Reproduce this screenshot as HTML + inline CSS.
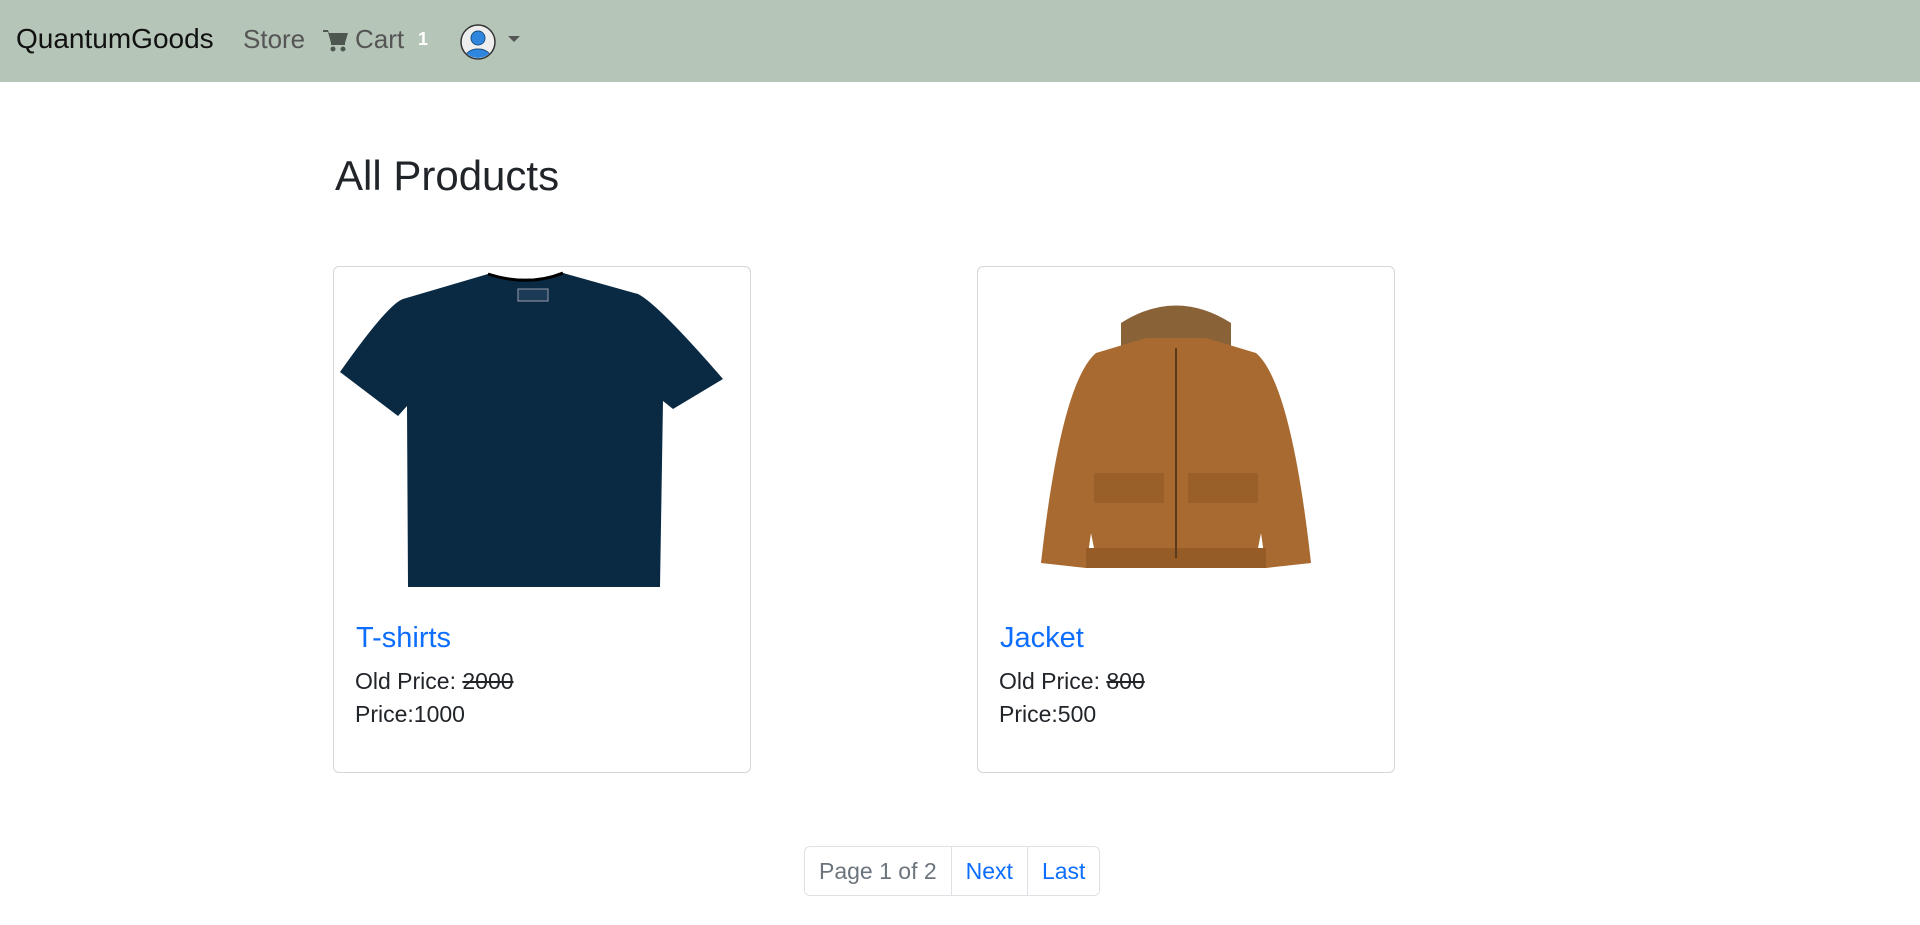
<!DOCTYPE html>
<html><head><meta charset="utf-8"><style>
*{box-sizing:border-box;margin:0;padding:0}
body{width:1920px;height:925px;overflow:hidden;background:#fff;font-family:"Comic Sans MS","Liberation Sans",sans-serif;color:#212529}
.nav{height:82px;background:#b5c5b7;position:relative}
.nav span{position:absolute;top:24px;font-size:26px}
.card{position:absolute;top:266px;width:418px;height:507px;border:1px solid #d6d6d6;border-radius:6px}
.card h5{position:absolute;left:22px;top:355px;font-size:29px;font-weight:normal;color:#0d6efd}
.card p{position:absolute;left:21px;font-size:23px}
.pg{position:absolute;left:804px;top:846px;height:50px;border:1px solid #dee2e6;border-radius:6px;display:flex;font-size:23px}
.pg div{padding:0 14px;line-height:48px;border-right:1px solid #dee2e6;color:#0d6efd}
.pg div:last-child{border:none}
</style></head><body>
<div class="nav">
<span style="left:16px;color:#111;font-size:28px;top:23px">QuantumGoods</span>
<span style="left:243px;color:#555">Store</span>
<svg style="position:absolute;left:323px;top:28px" width="26" height="24" viewBox="0 0 26 24"><path d="M0 2h5l1 3h19l-3 10H8L5 4H0z" fill="#4e5650"/><rect x="8" y="15" width="14" height="2" fill="#4e5650"/><circle cx="10" cy="21" r="2.5" fill="#4e5650"/><circle cx="20" cy="21" r="2.5" fill="#4e5650"/></svg>
<span style="left:355px;color:#555">Cart</span>
<span style="left:418px;color:#fff;font-size:18px;top:29px;font-weight:bold">1</span>
<svg style="position:absolute;left:460px;top:24px" width="36" height="36" viewBox="0 0 36 36"><circle cx="18" cy="18" r="17" fill="#eee" stroke="#333" stroke-width="1.5"/><clipPath id="c"><circle cx="18" cy="18" r="16"/></clipPath><g clip-path="url(#c)"><circle cx="18" cy="14" r="7" fill="#2e86de" stroke="#1a4f80"/><ellipse cx="18" cy="34" rx="13" ry="9" fill="#2e86de" stroke="#1a4f80"/></g></svg>
<svg style="position:absolute;left:508px;top:36px" width="12" height="7"><path d="M0 0h12L6 6z" fill="#555"/></svg>
</div>
<div style="position:absolute;left:335px;top:152px;font-size:42px">All Products</div>
<div class="card" style="left:333px">
<svg style="position:absolute;left:4px;top:2px" width="410" height="330" viewBox="0 0 410 330"><path d="M150 5 Q190 15 225 4 L300 25 Q320 35 385 110 L335 140 L325 132 L322 318 L70 318 L69 137 L60 147 L2 103 Q50 35 65 30 Z" fill="#0a2a44"/><path d="M150 5 Q190 18 225 4" stroke="#000" stroke-width="3" fill="none"/><rect x="180" y="20" width="30" height="12" fill="#1b3a55" stroke="#99a"/></svg>
<h5>T-shirts</h5>
<p style="top:401px">Old Price: <s>2000</s></p>
<p style="top:434px">Price:1000</p>
</div>
<div class="card" style="left:977px">
<svg style="position:absolute;left:48px;top:26px" width="302" height="284" viewBox="0 0 302 284"><path d="M95 30 Q150 -5 205 30 L205 55 L95 55Z" fill="#8a6238"/><path d="M70 60 L120 45 L180 45 L230 60 Q265 90 285 270 L240 275 L235 240 L230 265 L70 265 L65 240 L60 275 L15 270 Q35 90 70 60Z" fill="#a86a30"/><rect x="60" y="255" width="180" height="20" fill="#955c27"/><path d="M150 55 V265" stroke="#5a3a1a" stroke-width="2"/><rect x="68" y="180" width="70" height="30" fill="#9a6029"/><rect x="162" y="180" width="70" height="30" fill="#9a6029"/></svg>
<h5>Jacket</h5>
<p style="top:401px">Old Price: <s>800</s></p>
<p style="top:434px">Price:500</p>
</div>
<div class="pg"><div style="color:#6c757d">Page 1 of 2</div><div>Next</div><div>Last</div></div>
</body></html>
